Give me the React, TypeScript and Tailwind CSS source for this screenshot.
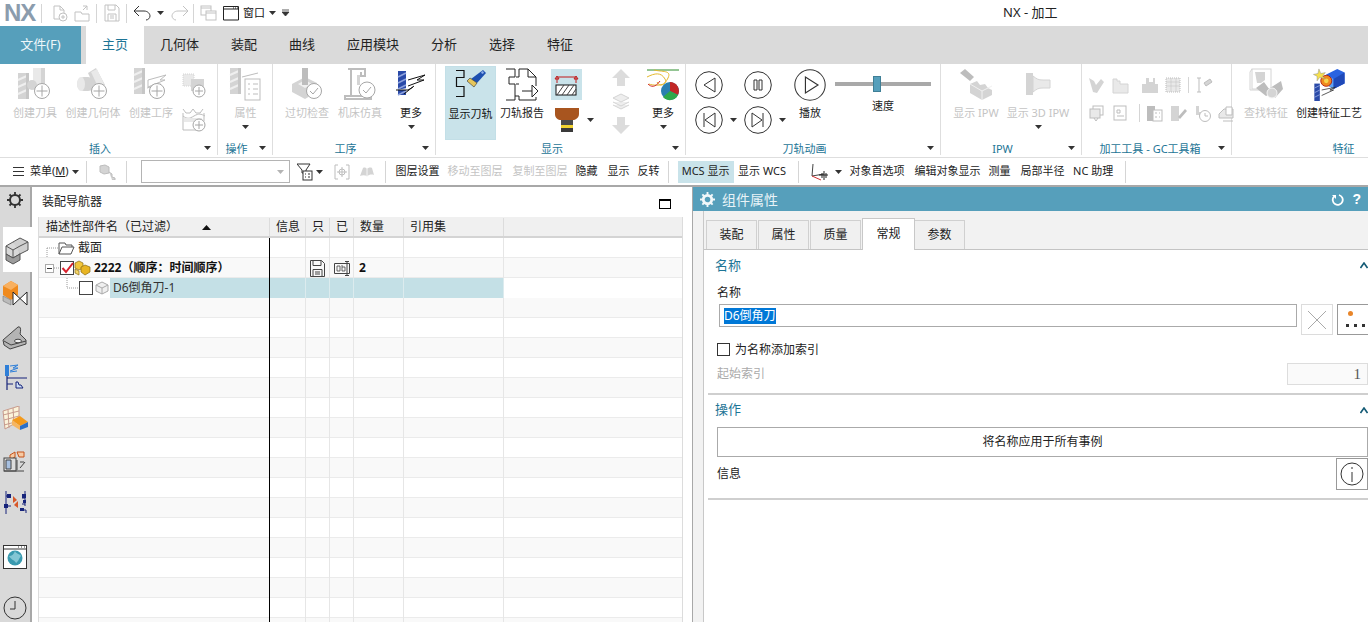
import type { ReactNode } from 'react';

const G1 = '#d4d4d4';
const G2 = '#bdbdbd';
const G3 = '#e9e9e9';

function Caret({ className = '', color = '#333' }: { className?: string; color?: string }) {
  return (
    <svg width="7" height="4" viewBox="0 0 7 4" className={className}>
      <path d="M0 0h7L3.500 4z" fill={color} />
    </svg>
  );
}

function Plus({ cx, cy, r = 7.5 }: { cx: number; cy: number; r?: number }) {
  return (
    <g>
      <circle cx={cx} cy={cy} r={r} fill="#fff" stroke="#a6a6a6" />
      <path d={`M${cx - r + 2} ${cy}h${2 * r - 4}M${cx} ${cy - r + 2}v${2 * r - 4}`} stroke="#a6a6a6" />
    </g>
  );
}

function Mill({ x, y, w, h, c = G1 }: { x: number; y: number; w: number; h: number; c?: string }) {
  return (
    <g>
      <rect x={x} y={y} width={w} height={h} fill={c} />
      <path d={`M${x} ${y + 7}l${w} -5M${x} ${y + 14}l${w} -5M${x} ${y + 21}l${w} -5`} stroke="#efefef" strokeWidth="2" />
      <rect x={x + w - 3} y={y} width="3" height={h} fill="#c6c6c6" />
    </g>
  );
}

function CreateTool() {
  return (
    <svg width="36" height="32" viewBox="0 0 36 32">
      <rect x="16" y="0" width="12" height="22" fill={G3} />
      <rect x="24" y="0" width="4" height="22" fill={G1} />
      <Mill x={1} y={5} w={11} h={26} />
      <circle cx="15" cy="17" r="5" fill={G1} />
      <Plus cx={25} cy={23} />
    </svg>
  );
}

function CreateGeometry() {
  return (
    <svg width="36" height="32" viewBox="0 0 36 32">
      <path d="M13 5l8-5 9 17-8 8z" fill={G1} />
      <path d="M16 4l6-3 7 15-5 5z" fill={G3} />
      <rect x="2" y="9" width="18" height="14" rx="7" fill={G1} />
      <ellipse cx="6" cy="16" rx="4" ry="7" fill={G3} />
      <Plus cx={24} cy={23} />
    </svg>
  );
}

function CreateOperation() {
  return (
    <svg width="36" height="32" viewBox="0 0 36 32">
      <Mill x={1} y={0} w={11} h={26} />
      <path d="M15 12l18-5-6 5 5 0-17 7zM14 20l14-4" fill="#fff" stroke={G2} />
      <Plus cx={24} cy={23} />
    </svg>
  );
}

function SmallDots() {
  return (
    <svg width="24" height="28" viewBox="0 0 24 28">
      <rect x="1" y="2" width="11" height="12" fill={G3} stroke={G1} strokeDasharray="1 1" />
      <rect x="9" y="7" width="13" height="12" fill={G1} strokeDasharray="1 1" />
      <Plus cx={17} cy={19} r={6} />
    </svg>
  );
}

function SmallWave() {
  return (
    <svg width="24" height="28" viewBox="0 0 24 28">
      <path d="M1 4l3 4h4l3-4 3 4h4l3-4M1 11c4 3 6 3 11 0s7-2 11 0M1 8v17h14M22 8v8" fill="none" stroke={G2} />
      <rect x="2" y="13" width="18" height="4" fill={G3} />
      <Plus cx={17} cy={20} r={6} />
    </svg>
  );
}

function PropertyIcon() {
  return (
    <svg width="34" height="33" viewBox="0 0 34 33">
      <Mill x={1} y={0} w={11} h={26} />
      <rect x="16" y="11" width="15" height="21" fill="#fff" stroke={G2} />
      <path d="M13 9l16-4M19 16h2M24 16h5M19 21h2M24 21h5M19 26h2M24 26h5" stroke={G2} fill="none" />
    </svg>
  );
}

function Gouge() {
  return (
    <svg width="34" height="32" viewBox="0 0 34 32">
      <path d="M2 16L15 9l12 6v9L15 31 2 24z" fill={G1} />
      <path d="M8 16l7-4 7 4-7 4z" fill="#f1f1f1" />
      <rect x="12" y="0" width="6" height="17" fill={G2} />
      <circle cx="24" cy="23" r="7.500" fill="#fff" stroke="#a6a6a6" />
      <path d="M20 23l3 3 5-6" fill="none" stroke="#a6a6a6" />
    </svg>
  );
}

function MachineSim() {
  return (
    <svg width="34" height="32" viewBox="0 0 34 32">
      <path d="M8 1v26M5 1h17v7h-4V4M2 28h26v3H2z" fill="none" stroke={G2} strokeWidth="2" />
      <rect x="14" y="7" width="3" height="10" fill={G1} />
      <circle cx="24" cy="22" r="8" fill="#fff" stroke="#a6a6a6" />
      <path d="M20 22l3 3 5-6" fill="none" stroke="#a6a6a6" />
    </svg>
  );
}

function MoreOp() {
  return (
    <svg width="30" height="26" viewBox="0 0 30 26">
      <rect x="2" y="0" width="8" height="24" fill="#2a4aa8" />
      <path d="M2 6l8-4M2 12l8-4M2 18l8-4M2 24l8-4" stroke="#8da2dd" strokeWidth="1.500" />
      <path d="M12 9l17-5-8 5 7 0-16 6M0 19l12 0 5-3M8 23l10-8" fill="#fff" stroke="#111" />
    </svg>
  );
}

function ShowPath() {
  return (
    <svg width="32" height="32" viewBox="0 0 32 32">
      <path d="M1 1.500h8v7H1.500v9H9v10H1" fill="none" stroke="#111" strokeWidth="1.200" />
      <path d="M28 1l3 3-9 10-6-4z" fill="#1d50b0" />
      <path d="M29 3l-2-1-1 2 2 1z" fill="#8fb0ea" />
      <path d="M15 9l7 5-3 4-7-6z" fill="#e6c65b" stroke="#333" strokeWidth=".6" />
    </svg>
  );
}

function PathReport() {
  return (
    <svg width="34" height="33" viewBox="0 0 34 33">
      <path d="M1 1h9v8H4v7h6v16H1M14 1h9l8 8v9M14 1v8h-3M23 1v8h8M11 16h3M10 28h4v4h17v-3" fill="none" stroke="#222" strokeWidth="1" />
      <path d="M17 23h10M27 17l6 6-6 6z" fill="#fff" stroke="#222" />
    </svg>
  );
}

function BoxArrows() {
  return (
    <svg width="26" height="26" viewBox="0 0 26 26">
      <path d="M3 11V5M3 4l-2 3h4zM22 11V5M22 4l-2 3h4zM4 5h17" fill="none" stroke="#c01818" />
      <rect x="2" y="13" width="20" height="10" fill="#fff" stroke="#111" />
      <path d="M3 23l7-10M8 23l7-10M13 23l7-10M18 23l4-6" stroke="#444" />
    </svg>
  );
}

function ToolShape() {
  return (
    <svg width="26" height="24" viewBox="0 0 26 24">
      <path d="M1 0h24v6c0 4-4 6-6 6H7c-3 0-6-2-6-6z" fill="#a8551f" />
      <rect x="7" y="12" width="12" height="5" fill="#4a4a4a" />
      <rect x="7" y="17" width="12" height="3" fill="#f1d230" />
      <rect x="7" y="20" width="12" height="4" fill="#3a3a3a" />
    </svg>
  );
}

function GrayArrow({ up }: { up?: boolean }) {
  return (
    <svg width="18" height="17" viewBox="0 0 18 17">
      <path d={up ? 'M9 0l9 9h-5v8H5V9H0z' : 'M9 17l9-9h-5V0H5v8H0z'} fill="#dcdcdc" />
    </svg>
  );
}

function Layers() {
  return (
    <svg width="18" height="17" viewBox="0 0 18 17">
      <path d="M1 5l8-4 8 4-8 4zM1 9l8 4 8-4M1 12l8 4 8-4" fill="#eee" stroke={G1} />
    </svg>
  );
}

function MorePie() {
  return (
    <svg width="34" height="34" viewBox="0 0 34 34">
      <path d="M1 2h32" stroke="#2a8c2a" />
      <path d="M1 9c8-4 14-5 18 2S8 18 3 16M8 2c8 2 18 0 14 8s-8 9-11 4" fill="none" stroke="#e5b92c" />
      <path d="M2 16c3 3 7 4 12-3" fill="none" stroke="#d02a2a" />
      <circle cx="24" cy="23" r="9" fill="#2a7fb0" />
      <path d="M24 23V14a9 9 0 0 1 8 13z" fill="#c22626" />
      <path d="M24 23l8 4a9 9 0 0 1-15 2z" fill="#2ea84a" />
    </svg>
  );
}

function PlayCircle({ size = 28, children }: { size?: number; children: ReactNode }) {
  return (
    <svg width={size} height={size} viewBox="0 0 28 28" className="shrink-0">
      <circle cx="14" cy="14" r="13.300" fill="#fff" stroke="#333" strokeWidth={size > 28 ? 0.9 : 1} />
      <g fill="none" stroke="#333">{children}</g>
    </svg>
  );
}

function ShowIpw() {
  return (
    <svg width="34" height="32" viewBox="0 0 34 32">
      <path d="M1 5l5-4 9 8-4 4z" fill={G2} />
      <path d="M11 16l7-3 3 4 5-1 3 4 4 2v5l-10 5-12-7z" fill={G1} />
      <path d="M11 16l12 7 10-5M23 23v9" stroke="#f1f1f1" fill="none" />
    </svg>
  );
}

function Show3dIpw() {
  return (
    <svg width="26" height="24" viewBox="0 0 26 24">
      <rect x="1" y="1" width="7" height="22" fill={G1} />
      <path d="M8 4c4 3 5 4 10 4h7v8h-7c-5 0-6 1-10 4z" fill={G3} stroke={G1} />
    </svg>
  );
}

const gcShapes = [
  <path key="a" d="M2 2l5 3 2 4 5-6 3 3-7 11-4-1z" fill={G1} />,
  <path key="b" d="M2 3h4v2h3v3h8v9H2z" fill={G3} stroke={G1} />,
  <path key="c" d="M6 2h3v4h4V2h2v6h3v9H2V8h4z" fill={G1} />,
  <g key="d"><rect x="2" y="2" width="14" height="14" fill={G3} stroke={G2} strokeDasharray="1 1" /><path d="M2 6h14M2 10h14M7 2v14M12 2v14" stroke={G2} strokeWidth=".5" /></g>,
  <path key="e" d="M3 2h4M3 16h4M5 2v14M10 7l6-4 2 3-6 4z" stroke={G2} fill={G1} />,
  <g key="f"><rect x="6" y="2" width="10" height="9" fill="#fff" stroke={G2} /><rect x="3" y="5" width="10" height="9" fill={G3} stroke={G2} /><path d="M7 14l2 3 2-3" stroke={G2} fill="none" /></g>,
  <g key="g"><rect x="3" y="2" width="12" height="14" fill="#fff" stroke={G2} /><path d="M6 6h3v3H6zM6 12h7" fill="none" stroke={G2} /></g>,
  <g key="h"><rect x="2" y="2" width="8" height="15" fill={G2} /><rect x="8" y="6" width="9" height="11" fill="#fff" stroke={G2} /><path d="M10 9h2M14 9h1M10 13h2M14 13h1" stroke={G2} /></g>,
  <g key="i"><rect x="2" y="2" width="8" height="15" fill={G1} /><path d="M9 13l7-8 2 2-7 8z" fill={G2} /></g>,
  <g key="j"><path d="M3 2h3v6h4v3H3z" fill={G1} /><circle cx="12" cy="12" r="5.500" fill="#fff" stroke={G2} /><path d="M12 9v3h3" stroke={G2} fill="none" /></g>,
  <g key="k"><path d="M2 10l5-5h9v9H2z" fill={G3} stroke={G2} /><path d="M9 3h6v8H9z" fill="#fff" stroke={G2} /><path d="M6 17h10" stroke={G2} /></g>,
];

function Gc({ i }: { i: number }) {
  return (
    <svg width="19" height="19" viewBox="0 0 19 19" className="shrink-0">
      {gcShapes[i]}
    </svg>
  );
}

function FindFeature() {
  return (
    <svg width="36" height="32" viewBox="0 0 36 32">
      <rect x="4" y="1" width="19" height="20" fill="none" stroke={G1} />
      <path d="M4 1l-2 3v18h18l3-2" fill="none" stroke={G1} />
      <path d="M7 4h10v8l-4 3H9z" fill={G1} />
      <path d="M8 20l8-6 8 11-6 3zM22 20l11-7 2 8-8 9z" fill={G2} />
      <circle cx="24" cy="25" r="5" fill={G1} stroke="#f5f5f5" />
    </svg>
  );
}

function CreateFeature() {
  return (
    <svg width="32" height="33" viewBox="0 0 34 36">
      <path d="M14 7l12-6 8 4v12l-12 6-8-5z" fill="#2a63e0" />
      <path d="M14 7l8 5v11l-8-5z" fill="#5fa3f2" />
      <path d="M22 12l12-7v12l-12 6z" fill="#1f49b8" />
      <circle cx="14" cy="14" r="6" fill="#ef8a1e" stroke="#b02010" />
      <circle cx="14" cy="14" r="2.500" fill="#f4d54c" />
      <path d="M6 1l2 5 5-1-3 4 3 3-6-2-3 4V9L0 7l5-1z" fill="#f6e04c" stroke="#888" strokeWidth=".5" />
      <rect x="1" y="17" width="6" height="19" fill="#2a4aa8" />
      <path d="M1 22l6-3M1 27l6-3M1 32l6-3" stroke="#8da2dd" />
      <path d="M9 24l15-3-6 3 4 0-13 6" fill="#fff" stroke="#222" strokeWidth=".8" />
    </svg>
  );
}

function Big({ w, icon, label, dim, caret, iconClass = '' }: { w: number; icon?: ReactNode; label: string; dim?: boolean; caret?: boolean; iconClass?: string }) {
  return (
    <div className="flex shrink-0 flex-col items-center pt-[4px]" style={{ width: w }}>
      <div className={`flex h-[36px] items-start justify-center ${iconClass}`}>{icon}</div>
      <div className={`h-[17px] whitespace-nowrap text-[11px] leading-[17px] ${dim ? 'text-[#c4c4c4]' : 'text-[#222]'}`}>{label}</div>
      {caret && <Caret className="mt-[4px]" />}
    </div>
  );
}

function Group({ w, label, caret = true, className = '', labelClass = 'pr-[17px]', children }: { w: number; label: string; caret?: boolean; className?: string; labelClass?: string; children: ReactNode }) {
  return (
    <div className="flex h-[93px] shrink-0 flex-col pb-[2px]" style={{ width: w }}>
      <div className={`flex h-[76px] border-r border-[#dedede] ${className}`}>{children}</div>
      <div className={`relative flex h-[15px] items-center justify-center border-r border-[#dedede] pt-px text-[11px] leading-[15px] text-[#1d7596] ${labelClass}`}>
        {label}
        {caret && <Caret className="absolute right-[6px] top-[6px]" />}
      </div>
    </div>
  );
}

function Sep({ h = 'h-[22px]', m = '' }: { h?: string; m?: string }) {
  return <div className={`w-px shrink-0 bg-[#d5d5d5] ${h} ${m}`} />;
}

function TitleBar() {
  const s = '#c2c2c2';
  return (
    <div className="flex h-[26px] items-center bg-white">
      <div className="ml-[4px] w-[33px] font-['Liberation_Sans',sans-serif] text-[24px] font-bold leading-[26px] tracking-[-1px] text-[#8b9cad]">NX</div>
      <Sep h="h-[19px]" m="ml-[4px]" />
      <svg width="16" height="18" viewBox="0 0 16 18" className="ml-[10px]">
        <path d="M2 2h6l4 4v4M2 2v13h5M8 2v4h4" fill="none" stroke={s} />
        <circle cx="11" cy="13" r="4" fill="#fff" stroke={s} />
        <path d="M9 13h4M11 11v4" stroke={s} />
      </svg>
      <svg width="18" height="18" viewBox="0 0 18 18" className="ml-[6px]">
        <path d="M1 8h6l1 2h7v7H1zM9 6l4-4M13 2H9M13 2v4" fill="none" stroke={s} />
      </svg>
      <Sep h="h-[19px]" m="ml-[4px]" />
      <svg width="16" height="18" viewBox="0 0 16 18" className="ml-[7px]">
        <path d="M1 1h11l3 3v13H1zM4 1v5h7V1M4 17v-7h8v7M6 12h4M6 14h4" fill="none" stroke={s} />
      </svg>
      <Sep h="h-[19px]" m="ml-[6px]" />
      <svg width="18" height="16" viewBox="0 0 18 16" className="ml-[6px]">
        <path d="M1 6l5-5M1 6l5 5M1 6h10c4 0 6 3 6 5s-2 4-4 4" fill="none" stroke="#333" />
      </svg>
      <Caret className="ml-[6px]" />
      <svg width="18" height="16" viewBox="0 0 18 16" className="ml-[7px]">
        <path d="M17 6l-5-5M17 6l-5 5M17 6H7c-4 0-6 3-6 5s2 4 4 4" fill="none" stroke={s} />
      </svg>
      <Sep h="h-[19px]" m="ml-[4px]" />
      <svg width="17" height="16" viewBox="0 0 17 16" className="ml-[6px]">
        <rect x="1" y="1" width="10" height="9" fill="none" stroke={s} />
        <rect x="6" y="6" width="10" height="9" fill="#fff" stroke={s} />
        <path d="M1 3h10M6 8h10" stroke={s} />
      </svg>
      <svg width="17" height="15" viewBox="0 0 17 15" className="ml-[6px]">
        <path d="M.5.500h15v13.500H.5zM.5 3h15" fill="none" stroke="#222" />
        <path d="M10 2h1M12 2h1M14 2h1" stroke="#222" />
      </svg>
      <span className="ml-[3px] text-[11px] text-[#111]">窗口</span>
      <Caret className="ml-[4px]" />
      <svg width="8" height="8" viewBox="0 0 8 8" className="ml-[6px]">
        <path d="M0 1h7M0 3h7L3.500 7z" stroke="#333" strokeWidth=".8" fill="#333" />
      </svg>
      <div className="ml-[713px] text-[13px] text-[#222]">NX - 加工</div>
    </div>
  );
}

function TabBar() {
  const tabs = ['几何体', '装配', '曲线', '应用模块', '分析', '选择', '特征'];
  return (
    <div className="flex h-[38px] bg-[#dadada] text-[13px]">
      <div className="flex h-full w-[81px] items-center justify-center bg-[#569fbb] text-[#eef7fa]">文件(F)</div>
      <div className="ml-[5px] flex h-full w-[58px] items-center justify-center bg-white text-[#1d7596]">主页</div>
      {tabs.map((t) => (
        <div key={t} className="flex h-full items-center px-4 text-[#222]">
          {t}
        </div>
      ))}
    </div>
  );
}

function Ribbon() {
  return (
    <div className="flex h-[93px] bg-white">
      <Group w={218} label="插入" className="pl-[6px]">
        <Big w={58} icon={<CreateTool />} label="创建刀具" dim />
        <Big w={58} icon={<CreateGeometry />} label="创建几何体" dim />
        <Big w={58} icon={<CreateOperation />} label="创建工序" dim />
        <div className="flex w-[28px] flex-col items-center pt-[8px]">
          <SmallDots />
          <div className="mt-[5px]">
            <SmallWave />
          </div>
        </div>
      </Group>
      <Group w={55} label="操作">
        <Big w={55} icon={<PropertyIcon />} label="属性" dim caret />
      </Group>
      <Group w={163} label="工序" className="pl-[7px]">
        <Big w={54} icon={<Gouge />} label="过切检查" dim />
        <Big w={52} icon={<MachineSim />} label="机床仿真" dim />
        <Big w={50} icon={<MoreOp />} label="更多" caret iconClass="pt-[3px]" />
      </Group>
      <Group w={250} label="显示" className="pl-[9px]">
        <div className="mt-[2px] h-[74px] w-[51px] shrink-0 border border-[#c3dfe7] bg-[#c9e3ea]">
          <div className="-mt-[1px] flex flex-col items-center pt-[3px]">
            <div className="flex h-[36px] items-start">
              <ShowPath />
            </div>
            <div className="h-[17px] whitespace-nowrap text-[11px] leading-[17px] text-[#111]">显示刀轨</div>
          </div>
        </div>
        <Big w={52} icon={<PathReport />} label="刀轨报告" />
        <div className="flex w-[46px] shrink-0 flex-col pl-[3px] pt-[5px]">
          <div className="flex h-[31px] w-[31px] items-center justify-center bg-[#c9e3ea]">
            <BoxArrows />
          </div>
          <div className="mt-[8px] flex items-center">
            <div className="ml-[3px]">
              <ToolShape />
            </div>
            <Caret className="ml-[7px]" />
          </div>
        </div>
        <div className="flex w-[54px] shrink-0 flex-col items-center gap-[7px] pt-[5px]">
          <GrayArrow up />
          <Layers />
          <GrayArrow />
        </div>
        <Big w={30} icon={<MorePie />} label="更多" caret />
      </Group>
      <Group w={255} label="刀轨动画" className="pl-[9px]">
        <div className="flex w-[49px] shrink-0 flex-col gap-[7px] pt-[7px]">
          <PlayCircle>
            <path d="M20 7v14L9 14z" />
          </PlayCircle>
          <div className="flex items-center">
            <PlayCircle>
              <path d="M9 7v14M20 7v14L10 14z" />
            </PlayCircle>
            <Caret className="ml-[7px]" />
          </div>
        </div>
        <div className="flex w-[50px] shrink-0 flex-col gap-[7px] pt-[7px]">
          <PlayCircle>
            <path d="M10 9h3v10h-3zM15 9h3v10h-3z" />
          </PlayCircle>
          <div className="flex items-center">
            <PlayCircle>
              <path d="M19 7v14M8 7v14l10-7z" />
            </PlayCircle>
            <Caret className="ml-[7px]" />
          </div>
        </div>
        <div className="flex w-[32px] shrink-0 flex-col items-center pt-[5px]">
          <PlayCircle size={32}>
            <path d="M10 7v14l11-7z" />
          </PlayCircle>
          <div className="mt-[3px] whitespace-nowrap text-[11px] leading-[17px] text-[#222]">播放</div>
        </div>
        <div className="ml-[9px] flex w-[96px] shrink-0 flex-col pt-[12px]">
          <div className="flex h-[16px] items-center bg-[linear-gradient(transparent_6px,#a9a9a9_6px,#a9a9a9_10px,transparent_10px)] pl-[38px]">
            <div className="h-[16px] w-[8px] border border-[#3f7f96] bg-[#569fbb]" />
          </div>
          <div className="mt-[5px] pl-[37px] text-[11px] leading-[17px] text-[#222]">速度</div>
        </div>
      </Group>
      <Group w={141} label="IPW" className="pl-[4px]">
        <Big w={62} icon={<ShowIpw />} label="显示 IPW" dim />
        <Big w={62} icon={<Show3dIpw />} label="显示 3D IPW" dim caret iconClass="pt-[4px]" />
      </Group>
      <Group w={150} label="加工工具 - GC工具箱" labelClass="pr-[13px]" className="flex-col pl-[5px] pt-[11px]">
        <div className="flex h-[20px] items-center gap-[5px]">
          <Gc i={0} />
          <Gc i={1} />
          <div className="ml-[5px]">
            <Gc i={2} />
          </div>
          <Gc i={3} />
          <Sep h="h-[16px]" />
          <Gc i={4} />
        </div>
        <div className="mt-[8px] flex h-[20px] items-center gap-[5px]">
          <Gc i={5} />
          <Gc i={6} />
          <Sep h="h-[18px]" m="ml-[4px]" />
          <Gc i={7} />
          <Gc i={8} />
          <Gc i={9} />
          <Gc i={10} />
        </div>
      </Group>
      <Group w={135} label="特征" caret={false} className="border-r-0 pl-[4px]" labelClass="border-r-0 pl-[88px]">
        <Big w={60} icon={<FindFeature />} label="查找特征" dim />
        <Big w={66} icon={<CreateFeature />} label="创建特征工艺" />
      </Group>
    </div>
  );
}

function TB({ t, w, dim, on }: { t: string; w: number; dim?: boolean; on?: boolean }) {
  return (
    <div
      className={`flex h-[22px] shrink-0 items-center justify-center whitespace-nowrap text-[11px] ${dim ? 'text-[#c4c4c4]' : 'text-[#222]'} ${on ? 'bg-[#c9e3ea]' : ''}`}
      style={{ width: w }}
    >
      {t}
    </div>
  );
}

function Toolbar() {
  return (
    <div className="flex h-[30px] items-center border-t border-[#dedede] border-b-2 border-b-[#a8a8a8] bg-white">
      <svg width="11" height="9" viewBox="0 0 11 9" className="ml-[13px]">
        <path d="M0 .5h11M0 4.500h11M0 8.500h11" stroke="#333" />
      </svg>
      <div className="ml-[6px] whitespace-nowrap text-[11px] text-[#222]">
        菜单(<span className="underline">M</span>)
      </div>
      <Caret className="ml-[3px]" />
      <Sep m="ml-[7px]" />
      <svg width="18" height="16" viewBox="0 0 18 16" className="ml-[12px]">
        <path d="M1 2l5-1 4 2v6l-5 1-4-2zM10 8l3 2v3l3 1v2h-3" fill={G1} stroke={G2} />
      </svg>
      <Sep m="ml-[9px]" />
      <div className="ml-[14px] flex h-[23px] w-[149px] shrink-0 items-center justify-end border border-[#b4b4b4] pr-[5px]">
        <Caret color="#b4b4b4" />
      </div>
      <svg width="16" height="18" viewBox="0 0 16 18" className="ml-[7px]">
        <path d="M0 1h13L9 7v3H5V7z" fill="#fff" stroke="#333" />
        <rect x="6" y="8" width="9" height="9" fill="#fff" stroke="#333" />
        <path d="M8 11h1M11 11h2M8 14h1M11 14h2" stroke="#333" />
      </svg>
      <Caret className="ml-[3px]" />
      <svg width="16" height="16" viewBox="0 0 16 16" className="ml-[11px]">
        <path d="M4 1H1v14h3M12 1h3v14h-3M8 3v10M3 8h10" fill="none" stroke={G2} />
        <circle cx="8" cy="8" r="3" fill="none" stroke={G2} />
      </svg>
      <svg width="16" height="12" viewBox="0 0 16 12" className="ml-[9px]">
        <path d="M1 10l3-8c2-1 3 0 4 1 1-1 3-2 5-1l2 7c-3-1-5 0-7 1-2-1-5-1-7 0z" fill={G1} />
        <path d="M8 3v8" stroke="#f5f5f5" />
      </svg>
      <Sep m="ml-[10px]" />
      <div className="ml-[10px]" />
      <TB t="图层设置" w={44} />
      <div className="ml-[8px]" />
      <TB t="移动至图层" w={55} dim />
      <div className="ml-[10px]" />
      <TB t="复制至图层" w={55} dim />
      <div className="ml-[8px]" />
      <TB t="隐藏" w={22} />
      <div className="ml-[10px]" />
      <TB t="显示" w={22} />
      <div className="ml-[8px]" />
      <TB t="反转" w={22} />
      <Sep m="ml-[8px]" />
      <div className="ml-[9px]" />
      <TB t="MCS 显示" w={56} on />
      <div className="ml-[4px]" />
      <TB t="显示 WCS" w={49} />
      <Sep m="ml-[11px]" />
      <svg width="20" height="20" viewBox="0 0 20 20" className="ml-[11px]">
        <path d="M2 14L3 2M2 14l12-2" stroke="#444" fill="none" />
        <path d="M2 14l9 4" stroke="#d03030" />
        <path d="M9 13h9M14 9v9M12 11v5M16 11v5" stroke="#222" fill="none" />
      </svg>
      <Caret className="ml-[5px]" />
      <div className="ml-[8px]" />
      <TB t="对象首选项" w={55} />
      <div className="ml-[10px]" />
      <TB t="编辑对象显示" w={66} />
      <div className="ml-[8px]" />
      <TB t="测量" w={22} />
      <div className="ml-[10px]" />
      <TB t="局部半径" w={44} />
      <div className="ml-[8px]" />
      <TB t="NC 助理" w={41} />
      <Sep m="ml-[11px]" />
    </div>
  );
}

function Cube({ className = '' }: { className?: string }) {
  return (
    <svg width="26" height="30" viewBox="0 0 26 30" className={className}>
      <path d="M1 11l7-4 7 4v8l-7 4-7-4z" fill="#d8d8d8" stroke="#555" />
      <path d="M8 7l7-4 8 4v8l-8 4" fill="#cfcfcf" stroke="#555" />
      <path d="M1 19l7 4 7-4v6l-7 4-7-4z" fill="#9c9c9c" stroke="#555" />
      <path d="M1 11l7 4 7-4M8 15v8M15 11l8-4" fill="none" stroke="#555" />
    </svg>
  );
}

function Sidebar() {
  return (
    <div className="flex w-[32px] shrink-0 flex-col border-r-2 border-[#a8a8a8] bg-[#d9d9d9] [&>*]:shrink-0">
      <div className="flex h-[40px] justify-center pt-[5px]">
        <svg width="16" height="16" viewBox="0 0 16 16">
          <circle cx="8" cy="8" r="5" fill="none" stroke="#333" strokeWidth="2" />
          <path d="M8 0v3M8 13v3M0 8h3M13 8h3M2.500 2.500l2 2M11.500 11.500l2 2M2.500 13.500l2-2M11.500 4.500l2-2" stroke="#333" strokeWidth="1.800" />
        </svg>
      </div>
      <div className="ml-[3px] mr-[-2px] flex h-[45px] items-center justify-center bg-white">
        <Cube />
      </div>
      <div className="flex h-[40px] items-center justify-center">
        <svg width="26" height="28" viewBox="0 0 26 28">
          <path d="M1 8l8-5 7 4v10l-7 5-8-5z" fill="#ef8a1e" />
          <path d="M1 18l8 4v5l-8-4z" fill="#bbb" stroke="#666" strokeWidth=".5" />
          <path d="M9 3l7 4-7 5-8-4z" fill="#f8b060" />
          <path d="M11 14l14 13V14L11 27z" fill="#fff" stroke="#222" />
        </svg>
      </div>
      <div className="mt-[6px] flex h-[40px] items-center justify-center">
        <svg width="26" height="24" viewBox="0 0 26 24">
          <path d="M1 14L16 1c3-1 3 3 2 7l6 6v4L8 23 2 19z" fill="#b4b4b4" stroke="#444" />
          <path d="M2 15l7 4 15-4" fill="none" stroke="#444" />
          <ellipse cx="16" cy="15" rx="3.500" ry="1.800" fill="#eee" stroke="#444" />
        </svg>
      </div>
      <div className="-mt-px flex h-[40px] items-center justify-center">
        <svg width="24" height="26" viewBox="0 0 24 26">
          <rect x="2" y="1" width="4" height="11" fill="#2f7fd8" />
          <path d="M7 2l8-1-5 3 5 0-8 3M7 8l7-1" stroke="#2f7fd8" fill="none" />
          <path d="M4 12v14M4 14h20M4 20h6" stroke="#16237a" strokeWidth="1.200" fill="none" />
          <path d="M13 18v6h7l-2-3h-2l-1-3z" fill="#cfe0f5" stroke="#16237a" />
        </svg>
      </div>
      <div className="mt-px flex h-[40px] items-center justify-center">
        <svg width="26" height="24" viewBox="0 0 26 24">
          <path d="M1 5l16-5v15L3 23z" fill="#fbf3da" stroke="#c79a8c" />
          <path d="M1 9l16-4M2 14l15-4M2 19l15-4M6 4l1 18M11 2l1 16" stroke="#c79a8c" />
          <path d="M10 14l8-4 8 6-8 4z" fill="#f39a1c" />
          <path d="M10 14v5l8 5v-4z" fill="#f6b660" />
          <path d="M18 20l8-4v5l-8 3z" fill="#2b70c8" />
        </svg>
      </div>
      <div className="mt-[3px] flex h-[40px] items-center justify-center">
        <svg width="24" height="26" viewBox="0 0 24 26">
          <path d="M7 7l5-3v5l-5 3zM14 4h4l3 0v5h-5z" fill="#f7c9a2" stroke="#c4531a" />
          <rect x="1" y="10" width="12" height="13" fill="#ddd" stroke="#444" />
          <path d="M3 12h5v9H3zM1 23h20" fill="#a8c0e0" stroke="#444" />
          <path d="M14 12v10M17 20l5-6M17 14h4" stroke="#444" fill="none" />
        </svg>
      </div>
      <div className="mt-px flex h-[40px] items-center justify-center">
        <svg width="24" height="24" viewBox="0 0 24 24">
          <path d="M3 1v23M3 6h5M3 16h5M22 1v9M22 11v5M19 8h3M19 14h3M19 20h4v3" stroke="#16237a" fill="none" />
          <path d="M4 4h4v4H4zM1 14h4v4H1zM19 4h4v4h-4zM20 10h3v3h-3zM17 18h4v3h-4z" fill="#16237a" />
          <path d="M10 6l4 4-4 3zM15 11v7l-4-3z" fill="#d8582a" />
        </svg>
      </div>
      <div className="mt-[15px] flex h-[40px] items-center justify-center">
        <svg width="25" height="24" viewBox="0 0 25 24">
          <rect x=".5" y=".5" width="23" height="23" fill="#fff" stroke="#333" />
          <path d="M1 4h22M15 2h1M18 2h1M21 2h1" stroke="#333" />
          <circle cx="12" cy="13" r="7.500" fill="#3a9ab0" />
          <path d="M6 11c3 0 5-2 6-5 1 3 5 3 6 5-2 2-2 5-5 7-1-3-5-3-7-7z" fill="#83c6d4" />
        </svg>
      </div>
      <div className="mt-[11px] flex h-[40px] items-center justify-center">
        <svg width="24" height="24" viewBox="0 0 24 24">
          <circle cx="12" cy="12" r="11" fill="none" stroke="#333" />
          <path d="M12 5v8H7" fill="none" stroke="#333" />
        </svg>
      </div>
    </div>
  );
}

const gridCols = 'grid grid-cols-[231px_36px_24px_24px_50px_100px_1fr]';

function Tree({ w, d }: { w: number; d: string }) {
  return (
    <svg width={w} height="20" viewBox={`0 0 ${w} 20`} className="shrink-0">
      <path d={d} fill="none" stroke="#9a9a9a" strokeDasharray="1 1" />
    </svg>
  );
}

function Row({ first, children, alt, bold }: { first?: ReactNode; children?: ReactNode; alt?: boolean; bold?: boolean }) {
  const cells = [0, 1, 2, 3, 4];
  return (
    <div className={`${gridCols} h-[20px] shrink-0 shadow-[inset_0_-1px_0_#ebebeb] ${alt ? 'bg-[#f9f9f9]' : 'bg-white'} text-[12px]`}>
      <div className={`flex items-center overflow-hidden border-r border-black ${bold ? 'font-bold' : ''}`}>{first}</div>
      {cells.map((c) => (
        <div key={c} className="flex items-center border-r border-[#e6e6e6]">
          {children && c === 1 && (
            <svg width="15" height="17" viewBox="0 0 15 17" className="ml-[4px]">
              <path d="M.5.500h11l3 3v13H.5zM3 .5v5h8v-5M3 16.500v-7h9v7M5 12h5M5 14h5" fill="none" stroke="#444" />
            </svg>
          )}
          {children && c === 2 && (
            <svg width="17" height="15" viewBox="0 0 17 15" className="ml-[4px]">
              <path d="M.5 2.500h15v10H.5zM13 0v15M11 .5h4M11 14.500h4" fill="none" stroke="#444" />
              <path d="M3 5h3v5H3zM8 4v6h3V6H8" fill="none" stroke="#444" strokeWidth=".8" />
            </svg>
          )}
          {children && c === 3 && <span className="ml-[5px] font-bold text-[#111]">2</span>}
        </div>
      ))}
      <div />
    </div>
  );
}

function CheckBox({ on }: { on?: boolean }) {
  return (
    <svg width="14" height="14" viewBox="0 0 14 14" className="shrink-0">
      <rect x=".5" y=".5" width="13" height="13" fill="#fff" stroke="#444" />
      {on && <path d="M2.500 7l3.500 4L13 2" fill="none" stroke="#d8202c" strokeWidth="2" />}
    </svg>
  );
}

function Navigator() {
  const headers = ['描述性部件名（已过滤）', '信息', '只', '已', '数量', '引用集'];
  const empties = Array.from({ length: 17 }, (_, i) => i);
  return (
    <div className="flex w-[660px] shrink-0 flex-col overflow-hidden bg-white pl-[6px] pr-[9px]">
      <div className="flex h-[30px] shrink-0 items-center justify-between pr-[12px]">
        <span className="ml-[4px] text-[12px] text-[#222]">装配导航器</span>
        <div className="mt-[3px] h-[10px] w-[12px] border border-black border-t-2" />
      </div>
      <div className="shrink-0 border-x border-[#dcdcdc]">
        <div className={`${gridCols} h-[21px] border-b-2 border-[#d4d4d4] bg-[#f0f0f0] pt-px text-[12px] text-[#222]`}>
          {headers.map((h, i) => (
            <div key={h} className={`flex items-center whitespace-nowrap border-r border-[#dcdcdc] ${i === 0 ? 'pl-[7px]' : 'pl-[6px]'}`}>
              {h}
              {i === 0 && (
                <svg width="9" height="5" viewBox="0 0 9 5" className="ml-[24px]">
                  <path d="M4.500 0L9 5H0z" fill="#111" />
                </svg>
              )}
            </div>
          ))}
          <div />
        </div>
        <Row
          first={
            <>
              <Tree w={19} d="M8 10v10M8 10h11" />
              <svg width="17" height="14" viewBox="0 0 17 14" className="shrink-0">
                <path d="M1 13V2h6l1 2h6v2M1 13l3-7h12l-3 7z" fill="#fff" stroke="#555" />
              </svg>
              <span className="ml-[3px] text-[#222]">截面</span>
            </>
          }
        />
        <Row
          alt
          bold
          first={
            <>
              <Tree w={6} d="" />
              <svg width="9" height="9" viewBox="0 0 9 9" className="shrink-0">
                <rect x=".5" y=".5" width="8" height="8" fill="#fff" stroke="#aaa" />
                <path d="M2 4.500h5" stroke="#333" />
              </svg>
              <Tree w={6} d="M0 10h6" />
              <CheckBox on />
              <svg width="17" height="16" viewBox="0 0 17 16" className="shrink-0">
                <path d="M1 3l4-2 4 2v5l-4 2-4-2z" fill="#f2c63c" stroke="#8a6a10" strokeWidth=".7" />
                <path d="M7 7l4-2 5 2v5l-5 3-4-3z" fill="#e8b422" stroke="#8a6a10" strokeWidth=".7" />
                <path d="M1 9l4 2v4l-4-2z" fill="#f5d66a" stroke="#8a6a10" strokeWidth=".7" />
              </svg>
              <span className="ml-[3px] whitespace-nowrap text-[12px] text-[#111]">2222（顺序：时间顺序）</span>
            </>
          }
        >
          1
        </Row>
        <div className={`${gridCols} h-[20px] bg-white text-[12px]`}>
          <div className="flex items-center border-r border-black">
            <Tree w={40} d="M28 0v10h12" />
            <CheckBox />
            <svg width="14" height="14" viewBox="0 0 14 14" className="ml-[2px] shrink-0">
              <path d="M1 4l6-3 6 3v6l-6 3-6-3z" fill="#efefef" stroke="#aaa" />
              <path d="M1 4l6 3 6-3M7 7v6" fill="none" stroke="#aaa" />
            </svg>
            <span className="ml-px flex h-full flex-1 items-center bg-[#c4e0e6] pl-[3px] text-[#333]">D6倒角刀-1</span>
          </div>
          {[0, 1, 2, 3, 4].map((c) => (
            <div key={c} className="border-r border-[#dcebee] bg-[#c4e0e6]" />
          ))}
          <div />
        </div>
        {empties.map((i) => (
          <Row key={i} alt={i % 2 === 0} />
        ))}
      </div>
    </div>
  );
}

function Chevron() {
  return (
    <svg width="8" height="7" viewBox="0 0 8 7" className="shrink-0">
      <path d="M.5 6L4 1l3.500 5" fill="none" stroke="#135a75" strokeWidth="1.600" />
    </svg>
  );
}

function Properties() {
  const tabs = ['装配', '属性', '质量'];
  return (
    <div className="flex min-w-0 flex-1 flex-col border-l border-[#a8a8a8] bg-[#f2f2f2]">
      <div className="flex h-[24px] shrink-0 items-center bg-[#569fbb] pl-[7px] pr-[7px]">
        <svg width="15" height="15" viewBox="0 0 16 16">
          <circle cx="8" cy="8" r="4.500" fill="none" stroke="#f2f8fa" strokeWidth="3" />
          <path d="M8 0v3M8 13v3M0 8h3M13 8h3M2.500 2.500l2 2M11.500 11.500l2 2M2.500 13.500l2-2M11.500 4.500l2-2" stroke="#f2f8fa" strokeWidth="2" />
        </svg>
        <span className="ml-[7px] text-[14px] text-[#e8f3f7]">组件属性</span>
        <svg width="13" height="13" viewBox="0 0 13 13" className="ml-auto">
          <path d="M8 2a5 5 0 1 1-5 1.500" fill="none" stroke="#fff" strokeWidth="1.800" />
          <path d="M1 2h4v4z" fill="#fff" />
        </svg>
        <span className="ml-[8px] font-['Liberation_Sans',sans-serif] text-[14px] font-bold leading-none text-white">?</span>
      </div>
      <div className="flex min-h-0 flex-1 pl-[10px]">
        <div className="flex min-w-0 flex-1 flex-col border-l border-[#c8c8c8]">
          <div className="flex h-[39px] shrink-0 items-end border-b border-[#c4c4c4] pl-[2px] text-[12px] text-[#222]">
            {tabs.map((t) => (
              <div key={t} className="mr-px flex h-[29px] w-[51px] items-center justify-center border border-b-0 border-[#d0d0d0] bg-[#f0f0f0]">
                {t}
              </div>
            ))}
            <div className="relative top-px flex h-[32px] w-[53px] items-center justify-center border border-b-0 border-[#c8c8c8] bg-white pb-[2px]">常规</div>
            <div className="flex h-[29px] w-[50px] items-center justify-center border border-b-0 border-l-0 border-[#d0d0d0] bg-[#f0f0f0]">参数</div>
          </div>
          <div className="flex flex-1 flex-col overflow-hidden bg-white pl-[4px]">
            <div className="flex h-[31px] shrink-0 items-center justify-between pl-[7px] text-[13px] text-[#1d7596]">
              名称
              <Chevron />
            </div>
            <div className="mt-[3px] h-[17px] shrink-0 pl-[9px] text-[12px] leading-[17px] text-[#222]">名称</div>
            <div className="mt-[3px] flex h-[31px] shrink-0 items-start pl-[11px]">
              <div className="flex h-[23px] w-[578px] shrink-0 items-center border border-[#aaa] pl-[4px]">
                <span className="bg-[#0078d7] text-[12px] leading-[16px] text-white">D6倒角刀</span>
              </div>
              <div className="ml-[4px] flex h-[31px] w-[32px] shrink-0 items-center justify-center border border-[#dcdcdc]">
                <svg width="20" height="20" viewBox="0 0 20 20">
                  <path d="M1 1l18 18M19 1L1 19" stroke="#aaa" />
                </svg>
              </div>
              <div className="ml-[4px] flex h-[31px] w-[32px] shrink-0 flex-col border border-[#999] pl-[8px] pt-[6px]">
                <div className="ml-[2px] h-[5px] w-[5px] rounded-full bg-[#e8852a]" />
                <div className="mt-[8px] flex gap-[5px]">
                  <div className="h-[3px] w-[3px] bg-[#333]" />
                  <div className="h-[3px] w-[3px] bg-[#333]" />
                  <div className="h-[3px] w-[3px] bg-[#333]" />
                </div>
              </div>
            </div>
            <div className="mt-[8px] flex h-[13px] shrink-0 items-center pl-[9px] text-[12px] text-[#222]">
              <div className="h-[13px] w-[13px] border border-[#333]" />
              <span className="ml-[5px]">为名称添加索引</span>
            </div>
            <div className="mt-[7px] flex h-[22px] shrink-0 items-center justify-between pl-[9px] text-[12px] text-[#aaa]">
              起始索引
              <div className="flex h-[22px] w-[81px] items-center justify-end border border-[#ddd] bg-[#fafafa] pr-[6px] font-['Liberation_Serif',serif] text-[15px] text-[#555]">1</div>
            </div>
            <div className="mt-[8px] h-[2px] shrink-0 bg-[#cfcfcf]" />
            <div className="flex h-[32px] shrink-0 items-center justify-between pb-[2px] pl-[7px] text-[13px] text-[#1d7596]">
              操作
              <Chevron />
            </div>
            <div className="ml-[9px] flex h-[30px] shrink-0 items-center justify-center border border-[#aaa] text-[12px] text-[#222]">将名称应用于所有事例</div>
            <div className="mt-px flex h-[32px] shrink-0 items-center justify-between pl-[9px] text-[12px] text-[#222]">
              信息
              <div className="flex h-[32px] w-[32px] items-center justify-center border border-[#999]">
                <svg width="24" height="24" viewBox="0 0 24 24">
                  <circle cx="12" cy="12" r="11" fill="none" stroke="#333" />
                  <path d="M12 10v10M12 5v2" stroke="#333" />
                </svg>
              </div>
            </div>
            <div className="mt-[8px] h-[2px] shrink-0 bg-[#cfcfcf]" />
          </div>
        </div>
      </div>
    </div>
  );
}

export default function App() {
  return (
    <div className="flex h-[622px] w-[1368px] flex-col overflow-hidden bg-white font-['Noto_Sans','Noto_Sans_CJK_SC',sans-serif]">
      <TitleBar />
      <TabBar />
      <Ribbon />
      <Toolbar />
      <div className="flex min-h-0 flex-1">
        <Sidebar />
        <Navigator />
        <Properties />
      </div>
    </div>
  );
}
